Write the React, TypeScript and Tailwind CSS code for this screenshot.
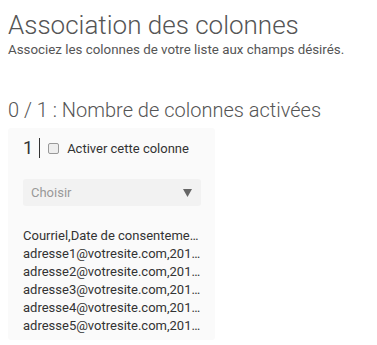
import React from "react";

const lines = [
  "Courriel,Date de consentement,Source",
  "adresse1@votresite.com,2018-01-01",
  "adresse2@votresite.com,2018-01-01",
  "adresse3@votresite.com,2018-01-01",
  "adresse4@votresite.com,2018-01-01",
  "adresse5@votresite.com,2018-01-01",
];

export default function App() {
  return (
    <div className="bg-white w-[377px] h-[345px] overflow-hidden px-2 text-[#555]" style={{ fontFamily: "Roboto, 'Liberation Sans', sans-serif" }}>
      <h1 className="text-[26px] font-light leading-none pt-[12px] text-[#555]">Association des colonnes</h1>
      <p className="text-[13.33px] leading-none mt-[5px] text-[#555]">Associez les colonnes de votre liste aux champs désirés.</p>
      <h2 className="text-[20px] font-light leading-none mt-[44px] text-[#555]">0 / 1 : Nombre de colonnes activées</h2>
      <div className="mt-[8px] w-[207px] h-[212px] bg-[#fafafa] rounded-[3px] pl-[15px] pr-[14px] pt-[10px]">
        <div className="flex items-center h-[20px]">
          <span className="text-[18px] leading-none text-[#333]">1</span>
          <span className="w-px h-[20px] bg-[#333] ml-[6px] mr-[8px]"></span>
          <span className="w-[11px] h-[11px] border border-[#999] rounded-[2px] bg-[#eee]"></span>
          <span className="ml-[8px] text-[13px] text-[#333]">Activer cette colonne</span>
        </div>
        <div className="mt-[21px] h-[27px] bg-[#f2f2f2] rounded-[3px] flex items-center justify-between pl-[8px] pr-[9px]">
          <span className="text-[13px] text-[#999]">Choisir</span>
          <svg width="9" height="8" viewBox="0 0 9 8"><path d="M0 0 H9 L4.5 8 Z" fill="#666" /></svg>
        </div>
        <div className="mt-[21px] text-[13px] leading-[18px] text-[#333]">
          {lines.map((l) => (
            <div key={l} className="truncate">{l}</div>
          ))}
        </div>
      </div>
    </div>
  );
}
